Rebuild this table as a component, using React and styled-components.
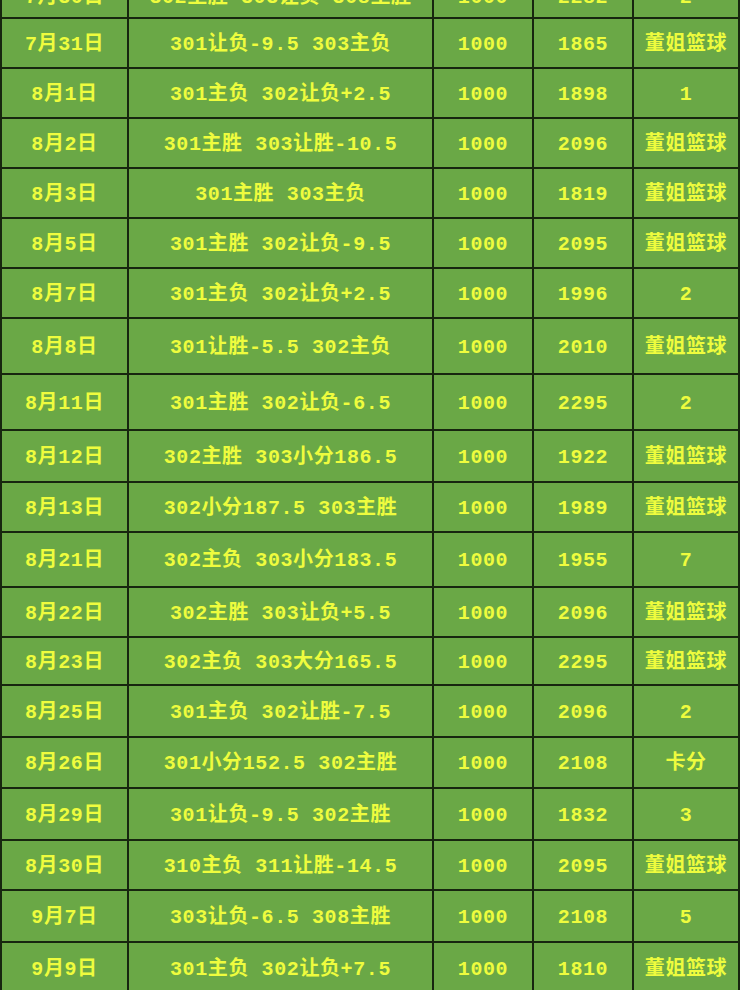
import React from "react";
import styled, { createGlobalStyle } from "styled-components";

const GlobalStyle = createGlobalStyle`
  html, body {
    margin: 0;
    padding: 0;
    background: #ffffff;
    overflow: hidden;
  }
`;

const Page = styled.div`
  width: 744px;
  height: 990px;
  overflow: hidden;
`;

const Table = styled.table`
  width: 738px;
  margin-top: -27px;
  border-collapse: collapse;
  table-layout: fixed;
  background: #6aa846;
  font-family: "Liberation Mono", "Noto Sans CJK SC", monospace;
  font-weight: bold;
  font-size: 20px;
  letter-spacing: 0.6px;
  color: #eefc3e;
`;

const Col = styled.col`
  width: ${(p) => p.$w}px;
`;

const Row = styled.tr`
  height: ${(p) => p.$h}px;
`;

const Cell = styled.td`
  border: 2px solid #17260f;
  padding: 3px 0 0;
  text-align: center;
  vertical-align: middle;
  white-space: pre;
  line-height: 1;
`;

const widths = [127, 305, 100, 100, 106];

const rows = [
  ["7月30日", "302主胜 303让负 308主胜", "1000", "2282", "2", 44],
  ["7月31日", "301让负-9.5 303主负", "1000", "1865", "董姐篮球", 50],
  ["8月1日", "301主负 302让负+2.5", "1000", "1898", "1", 50],
  ["8月2日", "301主胜 303让胜-10.5", "1000", "2096", "董姐篮球", 50],
  ["8月3日", "301主胜 303主负", "1000", "1819", "董姐篮球", 50],
  ["8月5日", "301主胜 302让负-9.5", "1000", "2095", "董姐篮球", 50],
  ["8月7日", "301主负 302让负+2.5", "1000", "1996", "2", 50],
  ["8月8日", "301让胜-5.5 302主负", "1000", "2010", "董姐篮球", 56],
  ["8月11日", "301主胜 302让负-6.5", "1000", "2295", "2", 56],
  ["8月12日", "302主胜 303小分186.5", "1000", "1922", "董姐篮球", 52],
  ["8月13日", "302小分187.5 303主胜", "1000", "1989", "董姐篮球", 50],
  ["8月21日", "302主负 303小分183.5", "1000", "1955", "7", 55],
  ["8月22日", "302主胜 303让负+5.5", "1000", "2096", "董姐篮球", 50],
  ["8月23日", "302主负 303大分165.5", "1000", "2295", "董姐篮球", 48],
  ["8月25日", "301主负 302让胜-7.5", "1000", "2096", "2", 52],
  ["8月26日", "301小分152.5 302主胜", "1000", "2108", "卡分", 51],
  ["8月29日", "301让负-9.5 302主胜", "1000", "1832", "3", 52],
  ["8月30日", "310主负 311让胜-14.5", "1000", "2095", "董姐篮球", 50],
  ["9月7日", "303让负-6.5 308主胜", "1000", "2108", "5", 52],
  ["9月9日", "301主负 302让负+7.5", "1000", "1810", "董姐篮球", 52],
];

export default function App() {
  return (
    <Page>
      <GlobalStyle />
      <Table>
        <colgroup>
          {widths.map((w, i) => (
            <Col key={i} $w={w} />
          ))}
        </colgroup>
        <tbody>
          {rows.map((r, i) => (
            <Row key={i} $h={r[5]}>
              {r.slice(0, 5).map((t, j) => (
                <Cell key={j}>{t}</Cell>
              ))}
            </Row>
          ))}
        </tbody>
      </Table>
    </Page>
  );
}
